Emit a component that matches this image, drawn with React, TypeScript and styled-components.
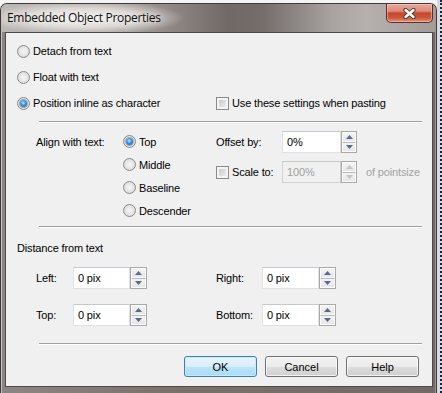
import React from "react";
import styled, { createGlobalStyle } from "styled-components";

const GlobalStyle = createGlobalStyle`
  html, body { margin: 0; padding: 0; }
  body {
    background: #f4f4f4;
    font-family: "Liberation Sans", Arial, sans-serif;
    font-size: 11px;
    letter-spacing: -0.15px;
    color: #000;
  }
  #root { width: 442px; height: 393px; overflow: hidden; }
`;

const Desktop = styled.div`
  display: flex;
  width: 442px;
  height: 393px;
  background: #f4f4f4;
`;

const RightStrip = styled.div`
  width: 5px;
  height: 393px;
  box-sizing: border-box;
  background: #d9dadc;
  border-right: 2px dotted #14205a;
`;

const Window = styled.div`
  width: 437px;
  height: 390px;
  margin-top: 3px;
  box-sizing: border-box;
  display: flex;
  flex-direction: column;
  border: 1px solid #3f3a38;
  border-bottom: none;
  border-radius: 7px 7px 0 0;
  overflow: hidden;
  background: linear-gradient(90deg, #8d8582 0%, #7a716d 40%, #716966 100%);
  box-shadow: inset 1px 1px 0 rgba(255, 255, 255, 0.5),
    inset -1px 0 0 rgba(255, 255, 255, 0.3);
`;

const TitleBar = styled.div`
  height: 28px;
  flex-shrink: 0;
  display: flex;
  align-items: flex-start;
  background:
    radial-gradient(ellipse 100px 17px at 84px 14px, rgba(248, 246, 243, 0.97) 0%, rgba(238, 235, 231, 0.75) 55%, rgba(220, 216, 212, 0) 100%),
    linear-gradient(90deg, #bdb9b6 0%, #a49d9a 30%, #706966 52%, #746d6a 60%, #a8a2a0 76%, #b6b1ae 84%, #a29c99 100%);
`;

const Title = styled.div`
  padding: 5px 0 0 6px;
  font-family: "Open Sans", "Noto Sans", sans-serif;
  font-size: 12px;
  letter-spacing: -0.3px;
  color: #101010;
  line-height: 18px;
  text-shadow: 0 0 6px rgba(255, 255, 255, 0.9);
`;

const CloseButton = styled.div`
  margin-left: auto;
  margin-right: 3px;
  width: 47px;
  height: 19px;
  box-sizing: border-box;
  border: 1px solid #5b2e27;
  border-top: none;
  border-radius: 0 0 5px 5px;
  background: linear-gradient(180deg, #e9aa9c 0%, #dc8a77 40%, #c7462d 50%, #cb553b 75%, #e39274 100%);
  box-shadow: inset 0 0 0 1px rgba(255, 220, 210, 0.45);
  display: flex;
  align-items: center;
  justify-content: center;
`;

const Client = styled.div`
  flex: 1;
  margin: 0 3px 6px 4px;
  background: #f0f0f0;
  border: 1px solid #4f4a48;
  display: flex;
  flex-direction: column;
`;

const TopSection = styled.div`
  padding: 5px 0 0 11px;
  display: flex;
  flex-direction: column;
`;

const OptionRow = styled.div`
  height: 26px;
  display: grid;
  grid-template-columns: 199px max-content;
  align-items: center;
`;

const Separator = styled.div<{ $top: number }>`
  height: 0;
  border-top: 1px solid #a0a0a0;
  border-bottom: 1px solid #ffffff;
  margin: ${(p) => p.$top}px 10px 0 33px;
`;

const Choice = styled.label`
  display: flex;
  align-items: center;
  gap: 3px;
  white-space: nowrap;
`;

const RadioCircle = styled.span<{ $checked?: boolean }>`
  width: 13px;
  height: 13px;
  box-sizing: border-box;
  border-radius: 50%;
  border: 1px solid #8a8a8a;
  background: radial-gradient(circle at 50% 50%, #f6f6f6 0%, #e4e4e4 55%, #cdcdcd 100%);
  display: inline-flex;
  align-items: center;
  justify-content: center;
  flex-shrink: 0;
  &::after {
    content: "";
    width: 7px;
    height: 7px;
    border-radius: 50%;
    display: ${(p) => (p.$checked ? "block" : "none")};
    background: radial-gradient(circle at 45% 40%, #bfe7ff 0%, #3d8fdc 45%, #0b4d95 100%);
    box-shadow: 0 0 0 1px rgba(30, 70, 120, 0.35);
  }
`;

const CheckSquare = styled.span`
  width: 13px;
  height: 13px;
  box-sizing: border-box;
  border: 1px solid #8a8a8a;
  background: #f4f4f4;
  padding: 2px;
  flex-shrink: 0;
  &::after {
    content: "";
    display: block;
    width: 7px;
    height: 7px;
    background: linear-gradient(135deg, #cbcbcb 0%, #dedede 60%, #ececec 100%);
  }
`;

const AlignSection = styled.div`
  padding: 7px 0 0 30px;
  display: grid;
  grid-template-columns: 87px 93px max-content;
  align-items: start;
`;

const FieldLabel = styled.div`
  height: 23px;
  display: flex;
  align-items: center;
  white-space: nowrap;
`;

const RadioColumn = styled.div`
  display: flex;
  flex-direction: column;
`;

const RadioLine = styled.div`
  height: 23px;
  display: flex;
  align-items: center;
`;

const RightColumn = styled.div`
  padding-top: 1px;
  display: flex;
  flex-direction: column;
  gap: 8px;
`;

const InlineField = styled.div`
  height: 22px;
  display: grid;
  grid-template-columns: 66px max-content max-content;
  align-items: center;
`;

const Spinner = styled.div`
  display: flex;
`;

const TextBox = styled.div<{ $width: number; $disabled?: boolean }>`
  width: ${(p) => p.$width}px;
  height: 22px;
  box-sizing: border-box;
  border: 1px solid ${(p) => (p.$disabled ? "#d2d2d2" : "#e0e2e8")};
  border-top-color: ${(p) => (p.$disabled ? "#c8c8c8" : "#c5c8d0")};
  background: ${(p) => (p.$disabled ? "#f0f0f0" : "#ffffff")};
  color: ${(p) => (p.$disabled ? "#a0a0a0" : "#000")};
  padding: 4px 0 0 4px;
  line-height: 12px;
`;

const SpinButtons = styled.div<{ $width: number }>`
  width: ${(p) => p.$width}px;
  height: 22px;
  box-sizing: border-box;
  border: 1px solid #a9a9a9;
  background: #e9e9e9;
  display: flex;
  flex-direction: column;
`;

const SpinHalf = styled.div<{ $down?: boolean }>`
  flex: 1;
  display: flex;
  align-items: center;
  justify-content: center;
  border: 1px solid #fbfbfb;
  border-top-width: ${(p) => (p.$down ? "0" : "1px")};
  background: linear-gradient(180deg, #f3f3f3 0%, #e6e6e6 100%);
  & + & {
    border-top: 1px solid #b9b9b9;
  }
`;

const Muted = styled.span`
  color: #a3a3a3;
  margin-left: 9px;
  white-space: nowrap;
`;

const DistanceSection = styled.div`
  padding: 13px 0 0 11px;
  display: flex;
  flex-direction: column;
`;

const SectionHeading = styled.div`
  height: 14px;
  line-height: 14px;
`;

const DistanceGrid = styled.div`
  margin-top: 12px;
  padding-left: 19px;
  display: grid;
  grid-template-columns: 37px 143px 46px max-content;
  row-gap: 15px;
  align-items: center;
`;

const ButtonRow = styled.div`
  margin-top: 11px;
  padding-right: 13px;
  display: flex;
  justify-content: flex-end;
  gap: 8px;
`;

const DialogButton = styled.button<{ $default?: boolean }>`
  width: 73px;
  height: 21px;
  box-sizing: border-box;
  padding: 0;
  font-family: "Liberation Sans", Arial, sans-serif;
  font-size: 11px;
  color: #000;
  border-radius: 3px;
  border: 1px solid ${(p) => (p.$default ? "#3c7fb1" : "#707070")};
  background: ${(p) =>
    p.$default
      ? "linear-gradient(180deg, #e9f5fc 0%, #d7eefb 50%, #bce4f9 51%, #a9dbf6 100%)"
      : "linear-gradient(180deg, #f2f2f2 0%, #ebebeb 50%, #dddddd 51%, #cfcfcf 100%)"};
  box-shadow: inset 0 0 0 1px ${(p) => (p.$default ? "rgba(200,235,255,0.9)" : "rgba(255,255,255,0.75)")};
`;

const Arrow = ({ down, disabled }: { down?: boolean; disabled?: boolean }) => (
  <svg width="7" height="4" viewBox="0 0 7 4">
    <path
      d={down ? "M0 0 H7 L3.5 4 Z" : "M0 4 H7 L3.5 0 Z"}
      fill={disabled ? "#c4c4c4" : "#56698f"}
    />
  </svg>
);

const SpinBox = ({
  value,
  width,
  spinWidth,
  disabled,
}: {
  value: string;
  width: number;
  spinWidth: number;
  disabled?: boolean;
}) => (
  <Spinner>
    <TextBox $width={width} $disabled={disabled}>
      {value}
    </TextBox>
    <SpinButtons $width={spinWidth}>
      <SpinHalf>
        <Arrow disabled={disabled} />
      </SpinHalf>
      <SpinHalf $down>
        <Arrow down disabled={disabled} />
      </SpinHalf>
    </SpinButtons>
  </Spinner>
);

const Radio = ({ label, checked }: { label: string; checked?: boolean }) => (
  <Choice>
    <RadioCircle $checked={checked} />
    <span>{label}</span>
  </Choice>
);

const Check = ({ label }: { label: string }) => (
  <Choice>
    <CheckSquare />
    <span>{label}</span>
  </Choice>
);

export default function App() {
  return (
    <Desktop>
      <GlobalStyle />
      <Window>
        <TitleBar>
          <Title>Embedded Object Properties</Title>
          <CloseButton>
            <svg width="13" height="11" viewBox="0 0 13 11">
              <path d="M2.5 2 L10.5 9 M10.5 2 L2.5 9" stroke="#3a3a3a" strokeWidth="4.2" strokeLinecap="round" />
              <path d="M2.5 2 L10.5 9 M10.5 2 L2.5 9" stroke="#ffffff" strokeWidth="2.4" strokeLinecap="round" />
            </svg>
          </CloseButton>
        </TitleBar>
        <Client>
          <TopSection>
            <OptionRow>
              <Radio label="Detach from text" />
            </OptionRow>
            <OptionRow>
              <Radio label="Float with text" />
            </OptionRow>
            <OptionRow>
              <Radio label="Position inline as character" checked />
              <Check label="Use these settings when pasting" />
            </OptionRow>
          </TopSection>
          <Separator $top={5} />
          <AlignSection>
            <FieldLabel>Align with text:</FieldLabel>
            <RadioColumn>
              <RadioLine>
                <Radio label="Top" checked />
              </RadioLine>
              <RadioLine>
                <Radio label="Middle" />
              </RadioLine>
              <RadioLine>
                <Radio label="Baseline" />
              </RadioLine>
              <RadioLine>
                <Radio label="Descender" />
              </RadioLine>
            </RadioColumn>
            <RightColumn>
              <InlineField>
                <span>Offset by:</span>
                <SpinBox value="0%" width={59} spinWidth={16} />
              </InlineField>
              <InlineField>
                <Check label="Scale to:" />
                <SpinBox value="100%" width={59} spinWidth={16} disabled />
                <Muted>of pointsize</Muted>
              </InlineField>
            </RightColumn>
          </AlignSection>
          <Separator $top={4} />
          <DistanceSection>
            <SectionHeading>Distance from text</SectionHeading>
            <DistanceGrid>
              <span>Left:</span>
              <SpinBox value="0 pix" width={57} spinWidth={17} />
              <span>Right:</span>
              <SpinBox value="0 pix" width={57} spinWidth={17} />
              <span>Top:</span>
              <SpinBox value="0 pix" width={57} spinWidth={17} />
              <span>Bottom:</span>
              <SpinBox value="0 pix" width={57} spinWidth={17} />
            </DistanceGrid>
          </DistanceSection>
          <Separator $top={17} />
          <ButtonRow>
            <DialogButton $default>OK</DialogButton>
            <DialogButton>Cancel</DialogButton>
            <DialogButton>Help</DialogButton>
          </ButtonRow>
        </Client>
      </Window>
      <RightStrip />
    </Desktop>
  );
}
